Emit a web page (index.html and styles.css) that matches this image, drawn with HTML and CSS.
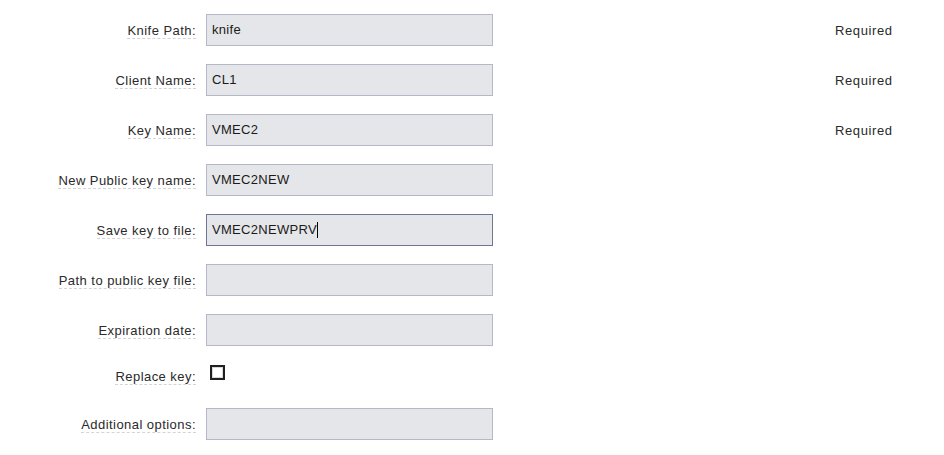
FILE: index.html
```html
<!DOCTYPE html>
<html>
<head>
<meta charset="utf-8">
<link rel="stylesheet" href="styles.css">
</head>
<body>
<form class="form">
  <div class="row">
    <span class="label">Knife Path:</span>
    <div class="field">knife</div>
    <span class="note">Required</span>
  </div>
  <div class="row">
    <span class="label">Client Name:</span>
    <div class="field">CL1</div>
    <span class="note">Required</span>
  </div>
  <div class="row">
    <span class="label">Key Name:</span>
    <div class="field">VMEC2</div>
    <span class="note">Required</span>
  </div>
  <div class="row">
    <span class="label">New Public key name:</span>
    <div class="field">VMEC2NEW</div>
  </div>
  <div class="row">
    <span class="label">Save key to file:</span>
    <div class="field focused">VMEC2NEWPRV<span class="caret"></span></div>
  </div>
  <div class="row">
    <span class="label">Path to public key file:</span>
    <div class="field"></div>
  </div>
  <div class="row">
    <span class="label">Expiration date:</span>
    <div class="field"></div>
  </div>
  <div class="row row-check">
    <span class="label">Replace key:</span>
    <div class="check-cell"><span class="checkbox"></span></div>
  </div>
  <div class="row">
    <span class="label">Additional options:</span>
    <div class="field"></div>
  </div>
</form>
</body>
</html>
```
FILE: styles.css
```css
html, body {
  margin: 0;
  padding: 0;
  background: #ffffff;
}
body {
  font-family: "Liberation Sans", Arial, sans-serif;
  font-size: 13px;
  color: #1a1a1a;
  -webkit-font-smoothing: none;
}
.form {
  display: flex;
  flex-direction: column;
  gap: 18px;
  padding-top: 14px;
}
.row {
  display: grid;
  grid-template-columns: 196px 287px 1fr;
  column-gap: 10px;
  align-items: center;
  height: 32px;
}
.label {
  justify-self: end;
  color: #2a2a2a;
  line-height: 15px;
  padding-top: 2px;
  letter-spacing: 0.45px;
  border-bottom: 1px dashed #d4d4d4;
}
.field {
  box-sizing: border-box;
  height: 32px;
  background: #e5e6e9;
  border: 1px solid #b4b8c8;
  padding: 0 5px;
  line-height: 30px;
  color: #1a1a1a;
  letter-spacing: 0.3px;
  white-space: nowrap;
  display: flex;
  align-items: center;
}
.field.focused {
  border-color: #6f7695;
}
.caret {
  display: inline-block;
  width: 1px;
  height: 16px;
  background: #000000;
}
.note {
  justify-self: start;
  margin-left: 332px;
  color: #2a2a2a;
  letter-spacing: 0.6px;
}
.row-check {
  height: 26px;
  align-items: start;
}
.row-check .label {
  margin-top: 3px;
}
.check-cell {
  padding-left: 4px;
}
.checkbox {
  display: block;
  box-sizing: border-box;
  width: 15px;
  height: 15px;
  margin-top: 1px;
  border: 2px solid #202020;
  background: #ffffff;
  box-shadow: inset 0 0 0 1px #d8d8d8;
}
```
